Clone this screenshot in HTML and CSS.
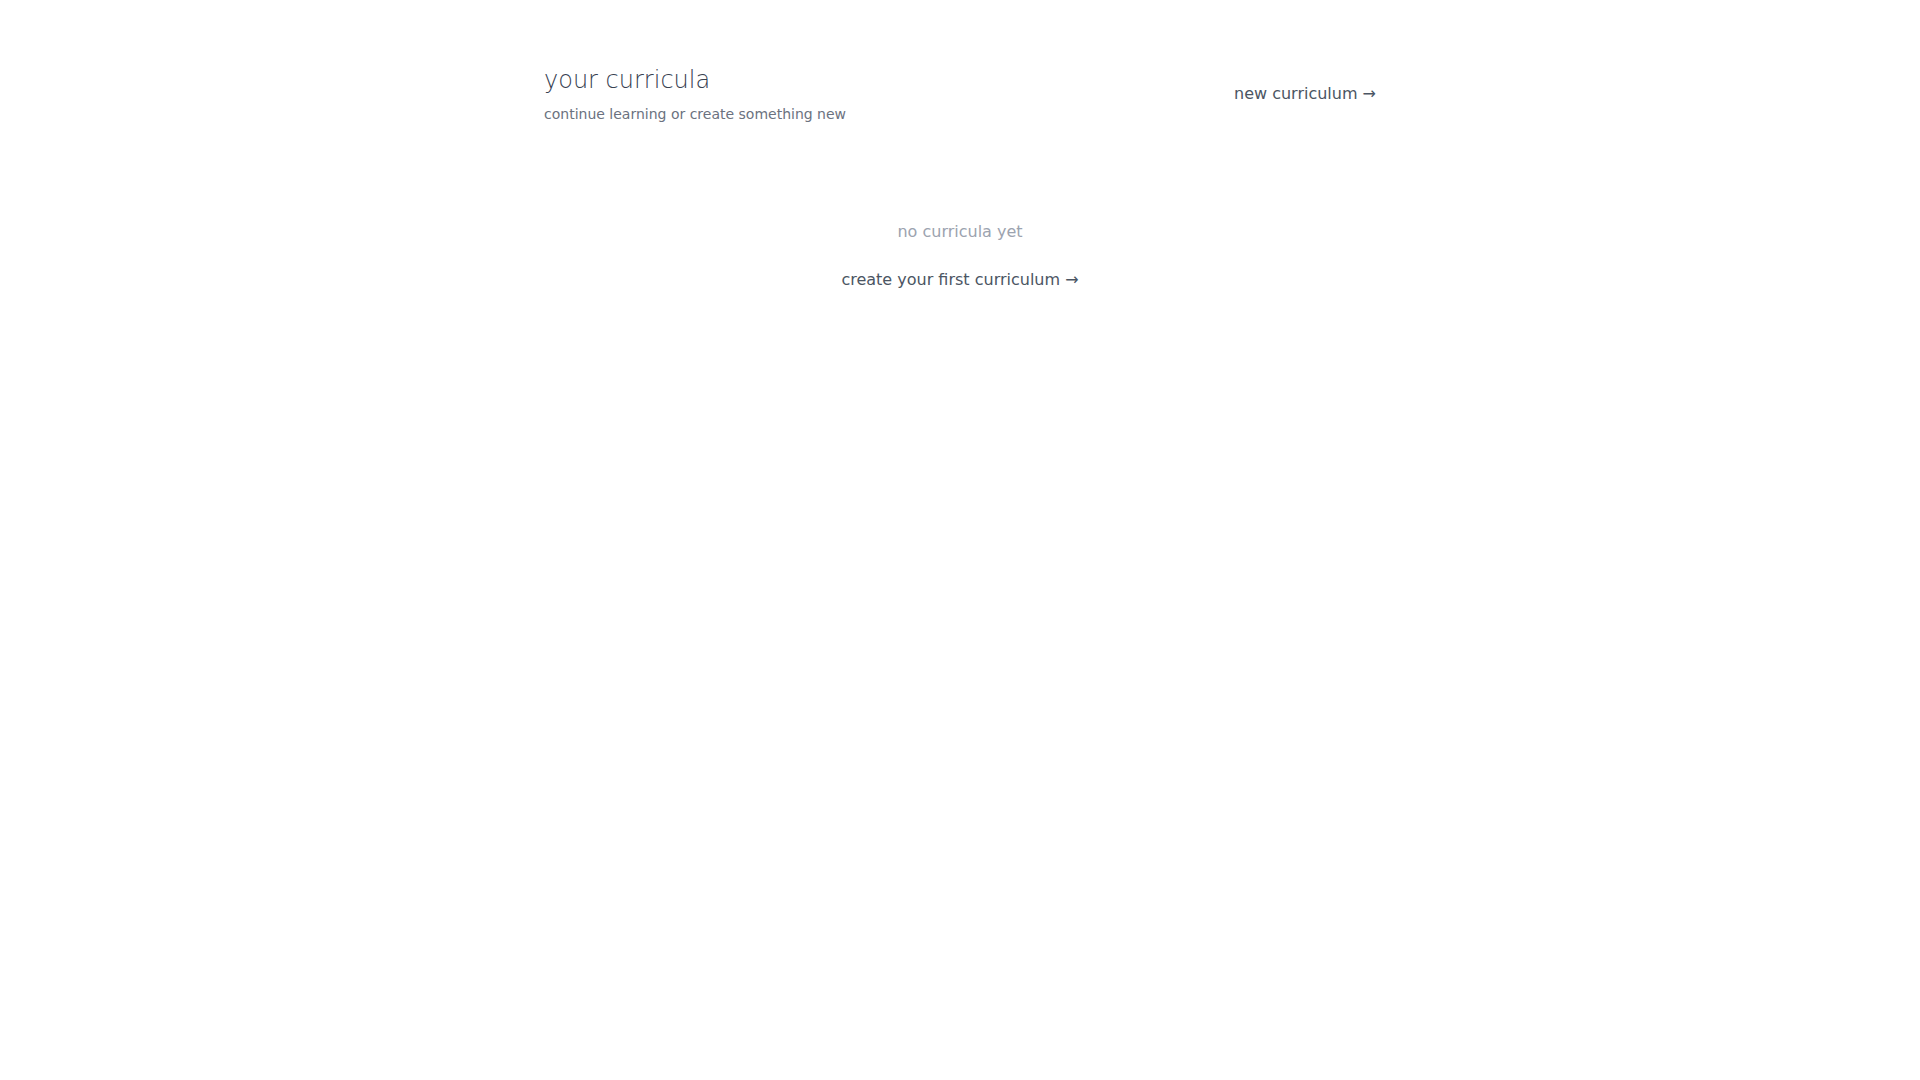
FILE: index.html
```html
<!DOCTYPE html>
<html lang="en">
<head>
<meta charset="utf-8">
<title>your curricula</title>
<link rel="stylesheet" href="styles.css">
</head>
<body>
<main class="page">
  <header class="header">
    <div class="header-text">
      <h1 class="title">your curricula</h1>
      <p class="subtitle">continue learning or create something new</p>
    </div>
    <a class="new-link" href="#">new curriculum →</a>
  </header>
  <section class="empty">
    <p class="empty-text">no curricula yet</p>
    <a class="empty-link" href="#">create your first curriculum →</a>
  </section>
</main>
</body>
</html>
```
FILE: styles.css
```css
* { box-sizing: border-box; }
html, body {
  margin: 0;
  padding: 0;
  background: #ffffff;
  font-family: "DejaVu Sans", sans-serif;
  color: #374151;
}
.page {
  max-width: 896px;
  margin: 0 auto;
  padding: 64px 32px;
}
.header {
  display: flex;
  justify-content: space-between;
  align-items: center;
  margin-bottom: 48px;
}
.title {
  margin: 0;
  font-size: 24px;
  line-height: 32px;
  font-weight: 300;
  color: #374151;
}
.subtitle {
  margin: 8px 0 0;
  font-size: 14px;
  line-height: 20px;
  color: #6b7280;
}
.new-link {
  font-size: 16px;
  line-height: 24px;
  color: #4b5563;
  text-decoration: none;
}
.empty {
  display: flex;
  flex-direction: column;
  align-items: center;
  gap: 24px;
  padding: 48px 0;
}
.empty-text {
  margin: 0;
  font-size: 16px;
  line-height: 24px;
  color: #9ca3af;
}
.empty-link {
  font-size: 16px;
  line-height: 24px;
  color: #4b5563;
  text-decoration: none;
}
```
